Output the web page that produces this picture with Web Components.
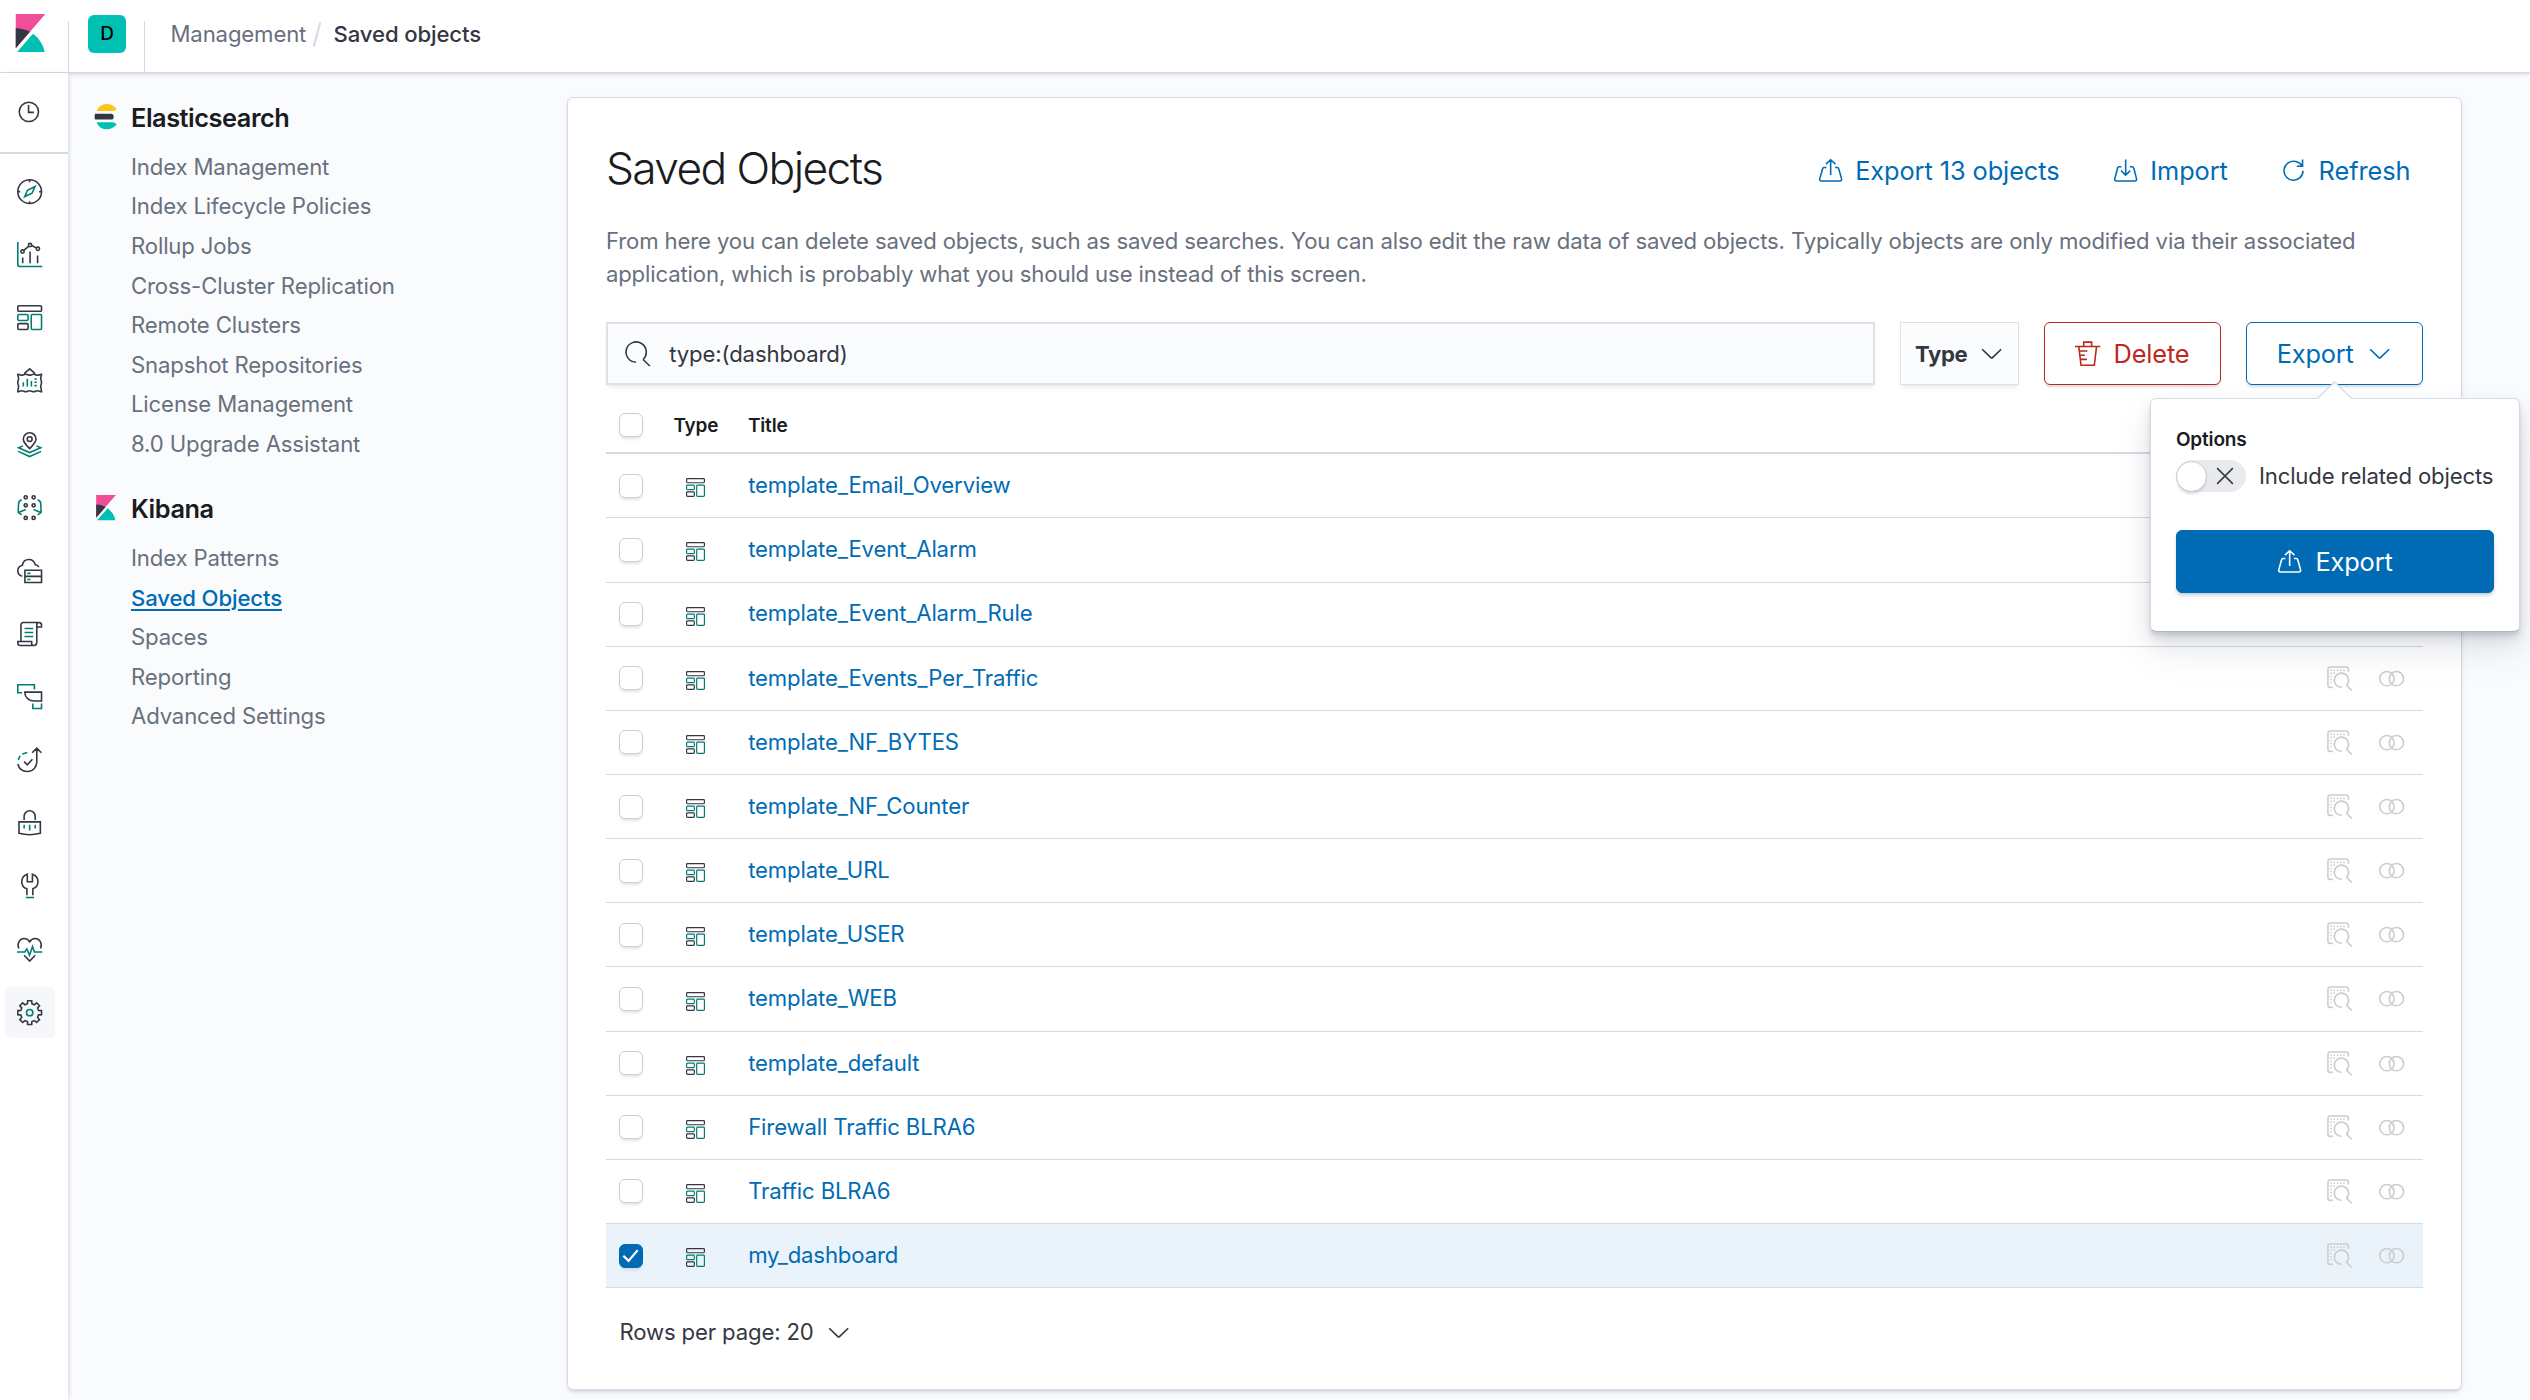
<!DOCTYPE html>
<html lang="en">
<head>
<meta charset="utf-8">
<title>Saved objects</title>
<style>
html,body{margin:0;height:100%;}
body{
  --s:22.17px;--m:25.33px;--xs:19px;
  --blue:#006BB4;--red:#BD271E;--teal:#017D73;--ink:#343741;--title:#1A1C21;--sub:#69707D;--line:#D3DAE6;--page:#FAFBFD;
  font:400 22.17px/33.2px Inter,"Liberation Sans",sans-serif;letter-spacing:-.0065em;color:var(--ink);
  background:var(--page);width:2530px;height:1400px;overflow:hidden;
}
</style>
</head>
<body>
<kb-app></kb-app>
<script>
const gear=(()=>{
  const pts=[];
  for(let i=0;i<8;i++){
    const a=i*Math.PI/4;
    const p=(r,w)=>{const c=Math.cos(a),s=Math.sin(a);pts.push((16+r*c-w*s).toFixed(2)+' '+(16+r*s+w*c).toFixed(2));};
    p(11.3,-2.8);p(15,-2.6);p(15,2.6);p(11.3,2.8);
  }
  return 'M'+pts.join('L')+'z';
})();
const T='class="t"';
/* name: [viewBox size, stroke width, markup] */
const ICONS={
  clock:[16,1,'<circle cx="7.5" cy="7.5" r="6.1"/><path d="M7.3 3.2V7.8H10.7"/>'],
  discover:[32,2,`<circle cx="16" cy="16" r="15"/><path d="M16 1v3M16 28v3M1 16h3M28 16h3"/><path ${T} d="M9.8 22.2L13.2 14.2 22.8 9.4 19 18z"/>`],
  visualize:[32,2,`<path ${T} d="M1 0v28a3 3 0 0 0 3 3h28"/><path d="M7.2 19.5V27M16.5 12v15M26 17v10M9 10.3l5.6-4.8M18.8 4.4l5.2 3"/><circle cx="7" cy="12" r="2.1"/><circle cx="16.5" cy="3.8" r="2.1"/><circle cx="26.4" cy="8.6" r="2.1"/>`],
  dashboard:[32,2,`<rect x="1" y="1" width="30" height="7" rx="1.5"/><rect ${T} x="1" y="12" width="13" height="7.5" rx="1.5"/><rect ${T} x="18" y="12" width="13" height="19" rx="1.5"/><rect x="1" y="23.5" width="13" height="7.5" rx="1.5"/>`],
  canvas:[32,2,`<path d="M9 7l7-6 7 6M1 8c2.500 0 3 1.200 5 1.200S8.500 7.800 11 7.800s3 1.200 5 1.200 3-1.200 5-1.200S24 9.200 26 9.200 29 8 31 8c0 2-1 3-1 5.300s1 2.700 1 5-1 2.700-1 5 1 3 1 6.700c-2 0-3-1.200-5-1.200s-3 1.200-5 1.200-3-1.200-5-1.200-3 1.200-5 1.200-3-1.200-5-1.200S3 30 1 30c0-3.700 1-4.400 1-6.700s-1-2.700-1-5 1-2.700 1-5S1 10 1 8z"/><path ${T} d="M8 18v5.500M13 13.500v10M18.200 16.500v7M22 14h3M22 18h3M22 22.300h3"/>`],
  maps:[32,2,`<path d="M16 1a7.900 7.900 0 0 0-8 8c0 4.600 4.600 8.200 8 12 3.400-3.800 8-7.400 8-12a7.900 7.900 0 0 0-8-8z"/><circle cx="16" cy="9" r="3.100"/><path ${T} d="M7.500 17.500L2 20l14 6 14-6-5.500-2.500M1.500 24.500L16 31l14.500-6.500"/>`],
  ml:[32,2,`<circle cx="11" cy="3" r="2"/><circle cx="21" cy="3" r="2"/><circle cx="11" cy="13" r="2"/><circle cx="21" cy="13" r="2"/><circle cx="11" cy="29" r="2"/><circle cx="21" cy="29" r="2"/><path ${T} d="M6 6C3 7 2 8.500 2 11L1.500 22 6 25M2 22l9-3.800M26 6c3 1 4 2.500 4 5l.5 11L26 25M30 22l-9-3.800"/>`],
  infra:[32,2,`<path d="M6.500 23C2.800 21.800 1 19 1 16c0-3 2-5.800 5.800-6.800C7.600 4.600 10.800 2 15 2c4 0 7 2.400 8 6.500 2 .2 3.600 1.200 4.700 3M10 15.500h21V31H10zM10 23.200h21"/><path ${T} d="M13 19.400h4M13 27.200h4"/>`],
  logs:[32,2,`<path d="M5 26V5.500C5 3.500 6 2 8 2h19.500C29.500 2 31 3 31 5v2.500h-6M25 7.500V5c0-1.500.8-3 2.500-3M25 7.500V27c0 2.500-1 4-3.500 4H4c-2 0-3-1.500-3-3.500V26h17.500v2c0 1.500.8 3 2.500 3"/><path ${T} d="M9.500 9.500h11M9.500 14.500h11M9.500 19.500h11"/>`],
  apm:[32,2,`<path ${T} d="M6.500 11H1V1h21v6M20 24.500V31h11v-6.500"/><path d="M9.800 10.300H31V21.500H22C15 21.500 10 17 9.800 10.300z"/>`],
  uptime:[32,2,`<path d="M25 1.500V19c0 6.500-5 12-12 12-6 0-10.500-3.500-12-9.500M19.200 7.200L25 1.500l5.800 5.700M9 18.500l4 4 6.500-7"/><path ${T} d="M6.800 8.800l6.200-2M1.600 16.200L3.800 11"/>`],
  siem:[32,2,`<path d="M9 12.500V8a7 7 0 0 1 14 0v4.500M2.500 15h27v14.500c-8 2-19 2-27 0z"/><path ${T} d="M9 18.500v5M16 18.500v7.500M23 18.500v5"/>`],
  dev:[32,2,`<path d="M12.500 28V20C8 18.500 6 15 6 11c0-4.500 2.500-8 7-9.500V11h6.500V1.500C24 3 26.500 6.500 26.500 11c0 4-2.500 7.500-6.500 9v8"/><path ${T} d="M11 31h10.500"/>`],
  monitor:[32,2,`<path d="M2.300 14.500C-.3 8.500 3 2 9 2c3.200 0 5.500 1.600 7 4 1.500-2.400 3.800-4 7-4 6 0 9.300 6.500 6.700 12.500M9 23l7 7.300 7-7.300"/><path ${T} d="M0 19h10l2.500-4 3.300 8 3.800-11 2.400 7h10"/>`],
  manage:[32,2,`<path d="${gear}"/><circle ${T} cx="16" cy="16" r="4"/>`],
  export:[16,1,'<path d="M5.300 6H3.900a1 1 0 0 0-1 .8L1.100 13.200a1 1 0 0 0 1 1.300h11.800a1 1 0 0 0 1-1.300L13.100 6.800a1 1 0 0 0-1-.8H10.700M8 10.800V1.200M5 3.900l3-2.800 3 2.800"/>'],
  import:[16,1,'<path d="M5.300 5.500H3.900a1 1 0 0 0-1 .8L1.100 13.200a1 1 0 0 0 1 1.300h11.800a1 1 0 0 0 1-1.300L13.100 6.300a1 1 0 0 0-1-.8H10.700M8 1v9.800M5.100 8L8 10.900 10.900 8"/>'],
  refresh:[16,1,'<path d="M13.900 8A6 6 0 1 1 9.300 2.200c1.700.4 3.200 1.400 4 2.800M13.600 1v4.200H10"/>'],
  search:[16,1,'<path d="M7 13.400A6.400 6.400 0 1 1 11.400 11.700M11.400 11.700L15.700 15.800"/>'],
  trash:[16,1,'<path d="M0 3.500h16M5.500 3.500V.7h5v2.800M2.400 3.500L3.800 15.300h8.400L13.600 3.500M2.800 6.300h5M3.200 9h3M3.500 11.600h4"/>'],
  down:[16,1,'<path d="M2 5.200l5.500 5.300c.3.300.7.300 1 0L14 5.200"/>'],
  cross:[16,1.3,'<path d="M1 1l14 14M15 1L1 15"/>'],
  check:[16,1.7,'<path d="M2.500 8.200l4 3.900 7-8.200"/>'],
  inspect:[16,1,'<path d="M13.500 3.600V2a1.400 1.400 0 0 0-1.400-1.400H2A1.400 1.400 0 0 0 .6 2V12.100A1.400 1.400 0 0 0 2 13.500h1.700M9.300 13.500A4.500 4.500 0 1 1 12.400 12.100L15.600 15.500"/><path stroke-dasharray="1 1.050" stroke-width=".9" d="M2 2.700h9.200M2 4.600h3.200M2 6.600h1M2 8.600h1M2 10.500h1"/>'],
  rel:[16,1,'<circle cx="5" cy="8" r="4.500"/><circle cx="11" cy="8" r="4.500"/>'],
  kibana:[32,0,'<path fill="#F04E98" d="M4 0v28.789L28.935.017z"/><path fill="#343741" d="M4 12v16.789l11.906-13.738A24.721 24.721 0 0 0 4 12"/><path fill="#00BFB3" d="M18.479 16.664L6.268 30.754l-1.073 1.237h23.191c-1.252-6.292-4.883-11.719-9.908-15.327"/>'],
  elastic:[32,0,'<path fill="#FEC514" d="M4.500 9H24c2.400 0 4.700-1 6-2.600C26.700 2.300 22.200 0 17 0 11.200 0 6.600 3.700 4.500 9z"/><path fill="#343741" d="M2 16c0 1.300.2 2.500.5 3.700H22.500a3.700 3.700 0 0 0 0-7.400H2.500C2.200 13.500 2 14.700 2 16z"/><path fill="#00BFB3" d="M4.500 23H24c2.400 0 4.700 1 6 2.600C26.700 29.700 22.200 32 17 32 11.200 32 6.600 28.300 4.500 23z"/>']
};
const el=(name,render)=>customElements.define(name,class extends HTMLElement{
  constructor(){super();this.attachShadow({mode:'open'});}
  connectedCallback(){this.shadowRoot.innerHTML=render(this);}
});

el('kb-icon',h=>{
  const [v,w,m]=ICONS[h.getAttribute('name')];
  const s=h.getAttribute('size')||25.33;
  return `<style>:host{display:block;flex:none;width:${s}px;height:${s}px}svg{display:block;overflow:visible}.t{stroke:var(--teal)}</style>
  <svg width="${s}" height="${s}" viewBox="0 0 ${v} ${v}" fill="none" stroke="${w?'currentColor':'none'}" stroke-width="${w}">${m}</svg>`;
});

el('kb-header',()=>`<style>
:host{display:flex;height:72px;background:#fff;border-bottom:1px solid var(--line);box-shadow:0 3px 3px -1px rgba(152,162,179,.3);position:relative;z-index:1}
.logo{width:57.300px;padding:14px 0 0 10.700px}
.space{width:75px;border:solid var(--line);border-width:0 1px;margin-top:21px;height:51px}
.d{width:38px;height:38px;margin:-6px 0 0 19px;border-radius:6px;background:#00BFB3;color:#000;font-size:19px;font-weight:500;line-height:38px;text-align:center}
nav{display:flex;padding-left:25.500px;height:69px;align-items:center;white-space:nowrap}
.a{color:var(--sub);width:146px}.sl{width:1.600px;height:25px;background:var(--line);transform:rotate(15deg);margin-right:15.500px}
.b{font-weight:500}
</style>
<div class="logo"><kb-icon name="kibana" size="38"></kb-icon></div>
<div class="space"><div class="d">D</div></div>
<nav><span class="a">Management</span><span class="sl"></span><span class="b">Saved objects</span></nav>`);

el('kb-rail',()=>`<style>
:host{display:block;width:68px;flex:none;background:#fff;box-shadow:2px 0 4px -1px rgba(152,162,179,.4);position:relative;z-index:2}
.recent{height:81px;padding:27px 0 0 16.800px;box-sizing:border-box;border-bottom:2px solid var(--line)}
ul{list-style:none;margin:0;padding:6.200px 0 0 5px}
li{height:63.140px;display:flex;align-items:center}
i{display:flex;width:50px;height:50.600px;border-radius:6px;align-items:center;justify-content:center}
i.on{background:#F5F7FA}
</style>
<div class="recent"><kb-icon name="clock"></kb-icon></div>
<ul>${['discover','visualize','dashboard','canvas','maps','ml','infra','logs','apm','uptime','siem','dev','monitor','manage'].map(n=>`<li><i class="${n==='manage'?'on':''}"><kb-icon name="${n}"></kb-icon></i></li>`).join('')}</ul>`);

el('kb-nav-group',h=>`<style>
:host{display:block}
.h{display:flex;align-items:center;height:40px;gap:13px;font-size:var(--m);font-weight:600;letter-spacing:-.018em;color:var(--title)}
kb-icon{margin-top:-2px}
.items{padding:10.700px 0 0 38.300px}
</style>
<div class="h"><kb-icon name="${h.getAttribute('logo')}"></kb-icon><span>${h.getAttribute('label')}</span></div>
<div class="items"><slot></slot></div>`);

el('kb-nav-link',()=>`<style>
:host{display:block;height:39.550px;line-height:39.550px;color:var(--sub);white-space:nowrap}
:host([active]){color:var(--blue);font-weight:500;text-decoration:underline;text-decoration-thickness:2px;text-underline-offset:3px}
</style><slot></slot>`);

el('kb-side',()=>{
  const g=(logo,label,items)=>`<kb-nav-group logo="${logo}" label="${label}">${items.map(t=>`<kb-nav-link${t==='Saved Objects'?' active':''}>${t}</kb-nav-link>`).join('')}</kb-nav-group>`;
  return `<style>:host{display:flex;flex-direction:column;gap:24.200px;width:474.200px;flex:none;padding:24.200px 0 0 24.700px;box-sizing:content-box}</style>`
  +g('elastic','Elasticsearch',['Index Management','Index Lifecycle Policies','Rollup Jobs','Cross-Cluster Replication','Remote Clusters','Snapshot Repositories','License Management','8.0 Upgrade Assistant'])
  +g('kibana','Kibana',['Index Patterns','Saved Objects','Spaces','Reporting','Advanced Settings']);
});

el('kb-link-button',()=>`<style>
:host{display:flex;align-items:center;gap:12px;color:var(--blue);font-size:var(--m);white-space:nowrap;letter-spacing:-.003em}
</style><slot name="icon"></slot><slot></slot>`);

el('kb-button',()=>`<style>
:host{display:flex;align-items:center;justify-content:center;gap:13px;box-sizing:border-box;height:63px;border:1.500px solid currentColor;border-radius:6px;font-size:var(--m);color:var(--blue);background:#fff;white-space:nowrap;box-shadow:0 3px 3px -1px rgba(152,162,179,.4)}
:host([color=danger]){color:var(--red)}
:host([fill]){background:var(--blue);border-color:var(--blue);color:#fff;box-shadow:0 3px 4px -1px rgba(54,97,126,.35)}
</style><slot></slot>`);

el('kb-check',h=>`<style>
:host{display:flex;flex:none;width:24px;height:24px;box-sizing:border-box;align-items:center;justify-content:center;border:1.500px solid #CDCED2;border-radius:6px;background:#fff;box-shadow:0 3px 3px -1px rgba(152,162,179,.3);color:#fff}
:host([checked]){background:var(--blue);border-color:var(--blue)}
</style>${h.hasAttribute('checked')?'<kb-icon name="check" size="21"></kb-icon>':''}`);

el('kb-row',h=>`<style>
:host{display:flex;align-items:center;box-sizing:border-box;height:64.170px;border-bottom:1px solid var(--line);padding:0 19px 0 13px}
:host([selected]){background:#EBF3FA}
.ty{margin:4px 0 0 43px}.n{margin-left:43.300px;color:var(--blue);flex:1}
.acts{display:flex;gap:26px;color:#CBCDD0}
</style>
<kb-check${h.hasAttribute('selected')?' checked':''}></kb-check>
<kb-icon class="ty" name="dashboard" size="19"></kb-icon>
<span class="n"><slot></slot></span>
<span class="acts"><kb-icon name="inspect"></kb-icon><kb-icon name="rel"></kb-icon></span>`);

el('kb-table',()=>`<style>
:host{display:block;margin-top:13px}
.h{display:flex;align-items:center;height:54px;border-bottom:2px solid var(--line);padding-left:13px;font-size:var(--xs);font-weight:600;color:var(--title)}
.h span{padding-top:1px}
.a{margin-left:30.500px;width:74.500px}
.f{display:flex;align-items:center;gap:12px;height:41px;margin:24px 0 0 13.500px}
</style>
<div class="h"><kb-check></kb-check><span class="a">Type</span><span>Title</span></div>
${['template_Email_Overview','template_Event_Alarm','template_Event_Alarm_Rule','template_Events_Per_Traffic','template_NF_BYTES','template_NF_Counter','template_URL','template_USER','template_WEB','template_default','Firewall Traffic BLRA6','Traffic BLRA6','my_dashboard'].map(t=>`<kb-row${t==='my_dashboard'?' selected':''}>${t}</kb-row>`).join('')}
<div class="f"><span>Rows per page: 20</span><kb-icon name="down"></kb-icon></div>`);

el('kb-popover',()=>`<style>
:host{display:block;position:absolute;top:76px;left:-96px;width:370px;height:234px;box-sizing:border-box;background:#fff;border:1px solid var(--line);border-bottom-color:#AEB5C2;border-radius:6px;padding:31px 25px;box-shadow:0 19px 38px 0 rgba(65,78,101,.1),0 10px 19px 0 rgba(65,78,101,.1),0 6px 6px 0 rgba(65,78,101,.1),0 3px 3px 0 rgba(65,78,101,.1);z-index:5}
svg{position:absolute;left:166px;top:-18px}
.o{font-size:var(--xs);line-height:20px;font-weight:600;color:var(--title)}
.r{display:flex;align-items:center;gap:13px;margin-top:10px;height:32px;white-space:nowrap}
.sw{display:flex;align-items:center;width:70px;height:32px;border-radius:16px;background:#E9EAEE;gap:9px;flex:none}
.th{width:31px;height:31px;box-sizing:border-box;border-radius:50%;background:#fff;border:1.500px solid #CACBD0;box-shadow:0 3px 3px -1px rgba(152,162,179,.4)}
kb-button{margin-top:38px}
</style>
<svg width="36" height="19" viewBox="0 0 36 19"><path d="M0 19L18 1 36 19" fill="#fff"/><path d="M0 17.900L17.500 .8 35 17.900" fill="none" stroke="#D3DAE6" stroke-width="1.300"/></svg>
<div class="o">Options</div>
<div class="r"><span class="sw"><span class="th"></span><kb-icon name="cross" size="18"></kb-icon></span><span>Include related objects</span></div>
<kb-button fill><kb-icon name="export"></kb-icon>Export</kb-button>`);

el('kb-panel',()=>`<style>
:host{display:block;box-sizing:border-box;width:1895px;height:1293px;margin-top:24px;flex:none;background:#fff;border:1px solid var(--line);border-radius:6px;box-shadow:0 3px 3px -1px rgba(152,162,179,.3),0 2px 8px -3px rgba(152,162,179,.3);padding:40.700px 38px 0}
.top{display:flex;height:64px;align-items:center}
h1{margin:0 auto 0 0;align-self:flex-start;font-size:44.330px;line-height:58px;font-weight:300;letter-spacing:-.036em;color:var(--title)}
.acts{display:flex;gap:53.500px;padding-right:12.500px}
p{margin:22.300px 0 0;color:var(--sub);white-space:nowrap}
.bar{display:flex;gap:25px;margin-top:30.800px}
.search{flex:1;display:flex;align-items:center;gap:19px;box-sizing:border-box;height:63px;padding-left:17px;border:2px solid #DFE1E5;background:#FBFCFD;box-shadow:0 4px 4px -2px rgba(152,162,179,.25)}
.search span,.type span{padding-top:1px}
.type{display:flex;align-items:center;gap:11.500px;box-sizing:border-box;width:119px;height:63px;padding-left:14px;border:1px solid #DFE1E5;background:#FBFCFD;font-weight:700;letter-spacing:-.015em;box-shadow:0 4px 4px -2px rgba(152,162,179,.25)}
.w{position:relative;width:177px}
</style>
<div class="top"><h1>Saved Objects</h1><div class="acts">
<kb-link-button><kb-icon slot="icon" name="export"></kb-icon>Export 13 objects</kb-link-button>
<kb-link-button><kb-icon slot="icon" name="import"></kb-icon>Import</kb-link-button>
<kb-link-button><kb-icon slot="icon" name="refresh"></kb-icon>Refresh</kb-link-button></div></div>
<p>From here you can delete saved objects, such as saved searches. You can also edit the raw data of saved objects. Typically objects are only modified via their associated<br>application, which is probably what you should use instead of this screen.</p>
<div class="bar">
<div class="search"><kb-icon name="search"></kb-icon><span>type:(dashboard)</span></div>
<div class="type"><span>Type</span><kb-icon name="down"></kb-icon></div>
<div class="w"><kb-button color="danger"><kb-icon name="trash"></kb-icon>Delete</kb-button></div>
<div class="w"><kb-button>Export<kb-icon name="down"></kb-icon></kb-button><kb-popover></kb-popover></div>
</div>
<kb-table></kb-table>`);

el('kb-app',()=>`<style>:host{display:flex;flex-direction:column;height:1400px}main{display:flex;flex:1}</style>
<kb-header></kb-header><main><kb-rail></kb-rail><kb-side></kb-side><kb-panel></kb-panel></main>`);
</script>
</body>
</html>
